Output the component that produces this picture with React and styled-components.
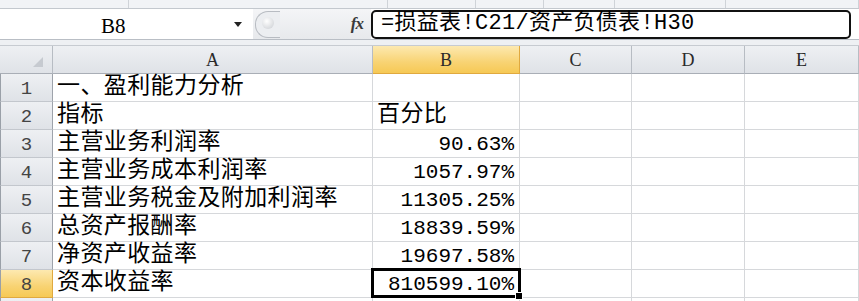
import styled, { createGlobalStyle, css } from "styled-components";

const GlobalStyle = createGlobalStyle`
  html, body {
    margin: 0;
    padding: 0;
    background: #ffffff;
    overflow: hidden;
  }
`;

const Page = styled.div`
  width: 859px;
  height: 301px;
  overflow: hidden;
  font-family: "Liberation Mono", "Noto Sans CJK SC", monospace;
  color: #000;
`;

const TopStrip = styled.div`
  height: 8px;
  display: flex;
  background: #f1f3f6;
  border-bottom: 1px solid #c3c8ce;
`;

const StripPart = styled.div`
  width: ${(p) => p.w}px;
  flex: ${(p) => (p.w ? "none" : "1")};
  border-right: 1px solid #cfd3d8;
`;

const FormulaBar = styled.div`
  height: 30px;
  display: flex;
  align-items: center;
  background: #ffffff;
  border-bottom: 1px solid #b9bec5;
`;

const NameBox = styled.div`
  width: 253px;
  height: 30px;
  display: flex;
  align-items: center;
  position: relative;
  background: #fff;
`;

const NameText = styled.span`
  position: absolute;
  left: 101px;
  top: 5px;
  font-family: "Liberation Serif", serif;
  font-size: 21px;
`;

const DropArrow = styled.span`
  position: absolute;
  left: 234px;
  top: 13px;
  width: 0;
  height: 0;
  border-left: 4px solid transparent;
  border-right: 4px solid transparent;
  border-top: 5px solid #222;
`;

const Splitter = styled.div`
  width: 118px;
  height: 30px;
  display: flex;
  align-items: center;
  justify-content: flex-end;
  position: relative;
  background: linear-gradient(#f4f5f7, #e7e9ec);
`;

const Knob = styled.div`
  position: absolute;
  left: 2px;
  top: 2px;
  width: 24px;
  height: 25px;
  border-radius: 13px 0 0 13px;
  border: 1px solid #b8bcc2;
  border-right: none;
  background: #eceef1;

  &::after {
    content: "";
    position: absolute;
    left: 6px;
    top: 5px;
    width: 12px;
    height: 12px;
    border-radius: 50%;
    background: radial-gradient(circle at 40% 35%, #ffffff, #c9ccd1);
  }
`;

const FxLabel = styled.span`
  margin-right: 8px;
  font-family: "Liberation Serif", serif;
  font-style: italic;
  font-weight: bold;
  font-size: 17px;
  color: #3a3a3a;
  letter-spacing: -1px;
`;

const FormulaInput = styled.div`
  width: 468px;
  height: 25px;
  border: 2.5px solid #111;
  border-radius: 5px;
  display: flex;
  align-items: center;
  padding-left: 8px;
  font-size: 22px;
  letter-spacing: 0.3px;
  line-height: 1;
  background: #fff;
`;

const Gap = styled.div`
  height: 5px;
  background: #eef0f3;
  border-bottom: 1px solid #c7cbd1;
`;

const Sheet = styled.div`
  display: grid;
  grid-template-columns: 53px 320px 147px 112px 113px 114px;
  grid-auto-rows: 28px;
`;

const headerBase = css`
  box-sizing: border-box;
  border-right: 1px solid #b7bcc3;
  border-bottom: 1px solid #a9aeb6;
  display: flex;
  align-items: center;
  justify-content: center;
  background: ${(p) =>
    p.active
      ? "linear-gradient(#fde9b0, #f8d373 60%, #f6c955)"
      : "linear-gradient(#eef0f3, #dfe2e7)"};
  ${(p) => p.active && "border-color: #e0a93f;"}
`;

const Corner = styled.div`
  ${headerBase};
  position: relative;
  &::after {
    content: "";
    position: absolute;
    right: 9px;
    bottom: 6px;
    width: 0;
    height: 0;
    border-left: 10px solid transparent;
    border-bottom: 10px solid #c6cad0;
  }
`;

const ColHead = styled.div`
  ${headerBase};
  font-family: "Liberation Serif", serif;
  font-size: 18px;
  color: #2a2a2a;
  padding-top: 2px;
`;

const RowHead = styled.div`
  ${headerBase};
  border-left: 1px solid #9aa0a8;
  border-right-color: ${(p) => (p.active ? "#e0a93f" : "#9ea3ab")};
  border-bottom-color: ${(p) => (p.active ? "#e0a93f" : "#c3c7cd")};
  font-family: "Liberation Mono", monospace;
  font-size: 19px;
  color: #444;
  padding-top: 3px;
`;

const Cell = styled.div`
  box-sizing: border-box;
  position: relative;
  border-right: 1px solid #d6d8db;
  border-bottom: 1px solid #d6d8db;
  display: flex;
  align-items: flex-end;
  justify-content: ${(p) => (p.right ? "flex-end" : "flex-start")};
  padding: 0 5px 2px 4px;
  font-size: ${(p) => (p.num ? 21 : 23)}px;
  letter-spacing: ${(p) => (p.num ? 0 : 0.4)}px;
  line-height: 1;
  white-space: nowrap;

  ${(p) =>
    p.selected &&
    css`
      &::after {
        content: "";
        position: absolute;
        left: -2px;
        top: -2px;
        right: -2px;
        bottom: -1px;
        border: 3px solid #000;
      }
      &::before {
        content: "";
        position: absolute;
        right: -4px;
        bottom: -3px;
        width: 6px;
        height: 6px;
        background: #000;
        border: 1px solid #fff;
        z-index: 2;
      }
    `}
`;

const columns = ["A", "B", "C", "D", "E"];

const rows = [
  ["一、盈利能力分析", ""],
  ["指标", "百分比"],
  ["主营业务利润率", "90.63%"],
  ["主营业务成本利润率", "1057.97%"],
  ["主营业务税金及附加利润率", "11305.25%"],
  ["总资产报酬率", "18839.59%"],
  ["净资产收益率", "19697.58%"],
  ["资本收益率", "810599.10%"],
];

const App = () => {
  return (
    <Page>
      <GlobalStyle />
      <TopStrip>
        <StripPart w={128} />
        <StripPart w={258} />
        <StripPart w={87} />
        <StripPart w={67} />
        <StripPart w={70} />
        <StripPart w={110} />
        <StripPart />
      </TopStrip>

      <FormulaBar>
        <NameBox>
          <NameText>B8</NameText>
          <DropArrow />
        </NameBox>
        <Splitter>
          <Knob />
          <FxLabel>fx</FxLabel>
        </Splitter>
        <FormulaInput>=损益表!C21/资产负债表!H30</FormulaInput>
      </FormulaBar>
      <Gap />

      <Sheet>
        <Corner />
        {columns.map((c) => (
          <ColHead key={c} active={c === "B"}>
            {c}
          </ColHead>
        ))}

        {rows.map(([a, b], i) => {
          const n = i + 1;
          const isPercent = b.endsWith("%");
          return [
            <RowHead key={`h${n}`} active={n === 8}>
              {n}
            </RowHead>,
            <Cell key={`a${n}`}>{a}</Cell>,
            <Cell key={`b${n}`} right={isPercent} num={isPercent} selected={n === 8}>
              {b}
            </Cell>,
            <Cell key={`c${n}`} />,
            <Cell key={`d${n}`} />,
            <Cell key={`e${n}`} />,
          ];
        })}

        {/* next row, only its top edge shows */}
        <RowHead />
        {columns.map((c) => (
          <Cell key={`n${c}`} />
        ))}
      </Sheet>
    </Page>
  );
};

export default App;
